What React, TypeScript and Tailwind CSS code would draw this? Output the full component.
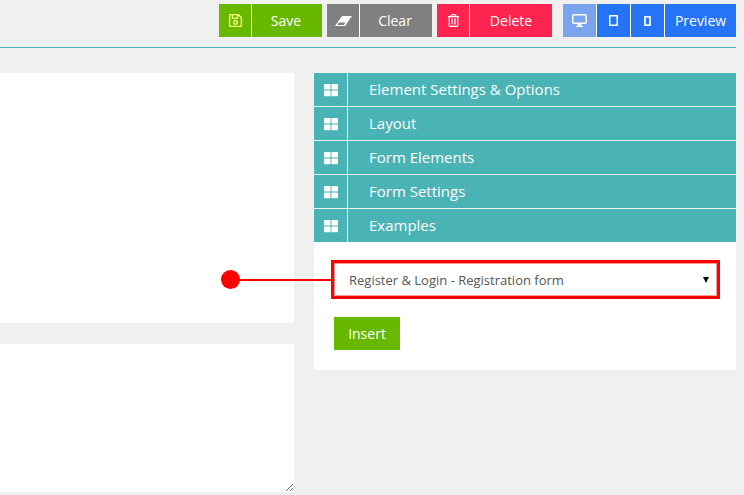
import React from 'react';
import { FaRegSave, FaRegTrashAlt, FaThLarge } from 'react-icons/fa';

const sections = ['Element Settings & Options', 'Layout', 'Form Elements', 'Form Settings', 'Examples'];

function EraserIcon() {
    return (
        <svg width="17" height="10" viewBox="0 0 17 10">
            <path fillRule="evenodd" d="M7 0h10l-7 10H0zM4 6.5L2.2 9h6.6l1.8-2.5z" fill="white" />
        </svg>
    );
}

function DesktopIcon() {
    return (
        <svg width="15" height="13" viewBox="0 0 15 13" fill="none">
            <rect x="0.75" y="0.75" width="13.5" height="8.5" rx="1" stroke="white" strokeWidth="1.5" />
            <rect x="5.5" y="10" width="4" height="2" fill="white" />
            <rect x="4" y="12" width="7" height="1" fill="white" />
        </svg>
    );
}

function TabletIcon() {
    return (
        <svg width="9" height="11" viewBox="0 0 9 11" fill="none">
            <rect x="0.75" y="0.75" width="7.5" height="9.5" stroke="white" strokeWidth="1.5" />
        </svg>
    );
}

function PhoneIcon() {
    return (
        <svg width="7" height="10" viewBox="0 0 7 10" fill="none">
            <rect x="1" y="0.75" width="5" height="8.5" stroke="white" strokeWidth="1.75" />
        </svg>
    );
}

function ActionButton({ icon, label, color, textWidth }: { icon: React.ReactNode; label: string; color: string; textWidth: string }) {
    return (
        <div className={`flex h-[33px] ${color}`}>
            <div className="flex w-8 items-center justify-center">{icon}</div>
            <div className="w-px bg-white" />
            <div className={`flex items-center justify-center text-sm ${textWidth}`}>{label}</div>
        </div>
    );
}

export default function App() {
    return (
        <div className="relative h-[495px] w-[744px] overflow-hidden bg-[#f0f0f0] text-white" style={{ fontFamily: '"Open Sans", sans-serif' }}>
            {/* Toolbar */}
            <div className="mr-2 flex h-12 items-start justify-end border-b border-[#4ab3b5] pt-1">
                <div className="flex gap-[5px]">
                    <ActionButton icon={<FaRegSave className="text-[15px] text-[#f6f77c]" />} label="Save" color="bg-[#68b800]" textWidth="w-[70px] pr-0.5" />
                    <ActionButton icon={<EraserIcon />} label="Clear" color="bg-[#808080]" textWidth="w-[72px] pr-0.5" />
                    <ActionButton icon={<FaRegTrashAlt className="text-[13px]" />} label="Delete" color="bg-[#ff2450]" textWidth="w-[82px]" />
                    <div className="ml-1.5 flex">
                        <div className="flex h-[33px] w-[33px] items-center justify-center bg-[#7aa5ee]"><DesktopIcon /></div>
                        <div className="w-px bg-white" />
                        <div className="flex w-[33px] items-center justify-center bg-[#2574f5]"><TabletIcon /></div>
                        <div className="w-px bg-white" />
                        <div className="flex w-[33px] items-center justify-center bg-[#2574f5]"><PhoneIcon /></div>
                        <div className="w-px bg-white" />
                        <div className="flex w-[71px] items-center justify-center bg-[#2574f5] text-sm">Preview</div>
                    </div>
                </div>
            </div>

            <div className="mt-[25px] flex gap-5">
                {/* Left editor panels */}
                <div className="flex w-[294px] flex-col">
                    <div className="h-[250px] bg-white" />
                    <textarea className="mt-[21px] block h-[148px] w-[294px] bg-white outline-none" />
                </div>

                {/* Right accordion */}
                <div className="w-[422px]">
                    <div className="flex flex-col gap-px">
                        {sections.map(name => (
                            <div key={name} className="flex h-[33px] bg-[#4ab3b5]">
                                <div className="flex w-[33px] items-center justify-center"><FaThLarge className="text-[14px]" /></div>
                                <div className="w-px bg-white" />
                                <div className="flex items-center pl-[21px] text-[15px]">{name}</div>
                            </div>
                        ))}
                    </div>
                    <div className="h-[128px] bg-white px-5 pt-[18px]">
                        <div className="relative -ml-[3px] flex h-[39px] w-[389px] items-center border-[3px] border-[#ff0000] pl-[15px] pt-0.5 text-[13px] text-[#555555] shadow-[inset_0_0_0_1px_#ff9999]">
                            Register &amp; Login - Registration form
                            <svg className="absolute right-2 top-3.5" width="6" height="6" viewBox="0 0 6 6"><path d="M0 0h6L3 6z" fill="black" /></svg>
                        </div>
                        <div className="mt-[18px] flex h-[33px] w-[66px] items-center justify-center bg-[#68b800] text-sm">Insert</div>
                    </div>
                </div>
            </div>

            {/* Callout marker */}
            <div className="absolute left-[221px] top-[270px] h-[19px] w-[19px] rounded-full bg-[#ff0000]" />
            <div className="absolute left-[238px] top-[279px] h-0.5 w-[94px] bg-[#ff0000]" />
        </div>
    );
}
